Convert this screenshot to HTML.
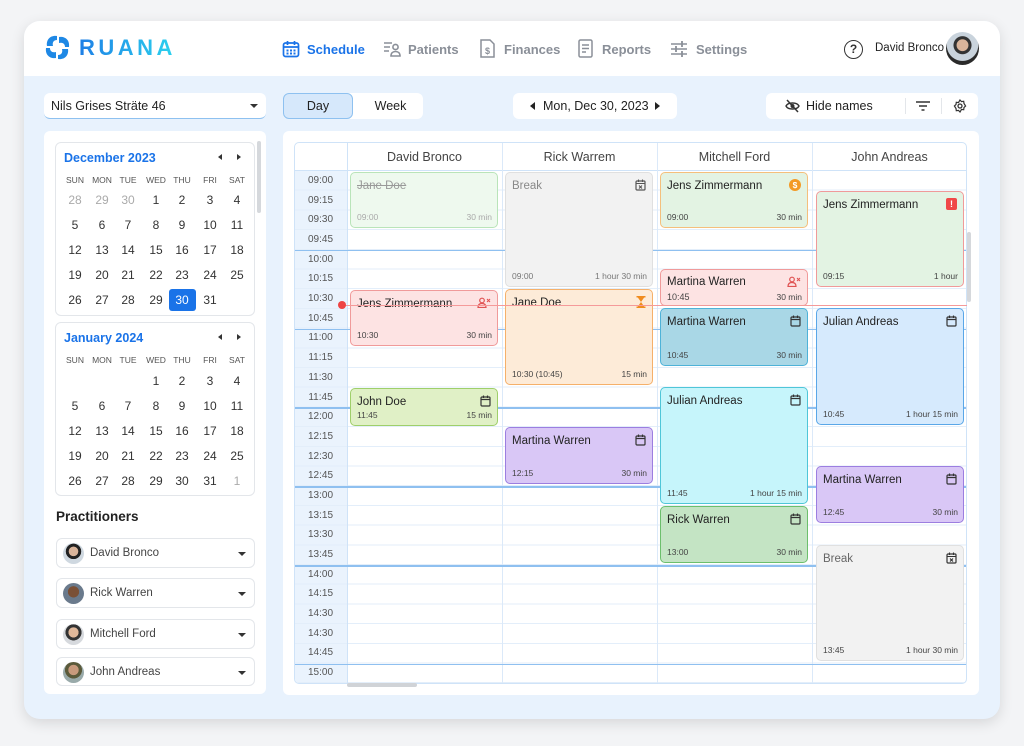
<!DOCTYPE html>
<html><head><meta charset="utf-8">
<style>
*{box-sizing:border-box;margin:0;padding:0}
body{width:1024px;height:746px;background:#f3f4f6;font-family:"Liberation Sans",sans-serif;color:#333;position:relative;overflow:hidden}
.abs{position:absolute}
.card{position:absolute;left:24px;top:21px;width:976px;height:698px;border-radius:16px;background:#e8f2fd;box-shadow:0 4px 14px rgba(0,0,0,.12);overflow:hidden}
.hdr{position:absolute;left:0;top:0;width:976px;height:55px;background:#fff}
.nav{position:absolute;top:21px;font-size:13px;color:#8a8f98;font-weight:bold}
.box{position:absolute;background:#fff;border-radius:6px}
.cal{position:absolute;border:1px solid #e3e6ea;border-radius:6px;background:#fff}
.d{position:absolute;width:26px;text-align:center;font-size:12px;color:#333}
.dw{position:absolute;width:26px;text-align:center;font-size:8.5px;color:#555}
.g{color:#aaa}
.pr{position:absolute;left:56px;width:199px;height:30px;border:1px solid #e3e6ea;border-radius:6px;background:#fff;font-size:11.5px;color:#444}
.pr .av{position:absolute;left:6px;top:4px;width:21px;height:21px;border-radius:50%}
.pr span{position:absolute;left:33px;top:8px}
.caret{position:absolute;width:0;height:0;border-left:4px solid transparent;border-right:4px solid transparent;border-top:4px solid #333}
.tl{position:absolute;left:294px;width:53px;text-align:center;font-size:10px;color:#555}
.ev{position:absolute;border-radius:5px;border:1.3px solid;font-size:11.5px;color:#222}
.ev .n{position:absolute;left:6px;top:7px}
.ev .a{position:absolute;left:6px;bottom:5px;font-size:8.5px;color:#444}
.ev .b{position:absolute;right:5px;bottom:5px;font-size:8.5px;color:#444}
.ic{position:absolute;right:6px;top:6px}
.colh{position:absolute;top:150px;width:155px;text-align:center;font-size:12.5px;color:#444}
</style></head><body>
<div class="card">
 <div class="hdr">
  <svg class="abs" style="left:20px;top:13px" width="27" height="27" viewBox="0 0 27 27">
   <path d="M13 2 C6 1 2 6 3 12 L9 12 C8 8 10 6 13 6 Z" fill="#1e88e5"/>
   <path d="M25 13 C26 6 21 2 15 3 L15 9 C19 8 21 10 21 13 Z" fill="#1e88e5"/>
   <path d="M14 25 C21 26 25 21 24 15 L18 15 C19 19 17 21 14 21 Z" fill="#1e88e5"/>
   <path d="M2 14 C1 21 6 25 12 24 L12 18 C8 19 6 17 6 14 Z" fill="#1e88e5"/>
  </svg>
  <div class="abs" style="left:55px;top:14px;font-size:22px;font-weight:bold;letter-spacing:3.5px;background:linear-gradient(90deg,#1e7fe6,#2cd3ee);-webkit-background-clip:text;color:transparent">RUANA</div>
  <svg class="abs" style="left:258px;top:19px" width="18" height="18" viewBox="0 0 18 18"><rect x="1.5" y="3" width="15" height="13.5" rx="2" fill="none" stroke="#1a73e8" stroke-width="1.7"/><path d="M1.5 7h15M5.5 1v4M12.5 1v4" stroke="#1a73e8" stroke-width="1.7"/><g fill="#1a73e8"><rect x="4.5" y="9.5" width="2" height="2"/><rect x="8" y="9.5" width="2" height="2"/><rect x="11.5" y="9.5" width="2" height="2"/><rect x="4.5" y="12.5" width="2" height="2"/><rect x="8" y="12.5" width="2" height="2"/><rect x="11.5" y="12.5" width="2" height="2"/></g></svg>
  <div class="nav" style="left:283px;color:#1a73e8">Schedule</div>
  <svg class="abs" style="left:359px;top:20px" width="18" height="16" viewBox="0 0 18 16"><path d="M1 2h8M1 6h6M1 10h5" stroke="#8a8f98" stroke-width="1.6"/><circle cx="12.5" cy="6" r="2.6" fill="none" stroke="#8a8f98" stroke-width="1.6"/><path d="M8 15c0-3 2-4.5 4.5-4.5S17 12 17 15z" fill="none" stroke="#8a8f98" stroke-width="1.6"/></svg>
  <div class="nav" style="left:384px">Patients</div>
  <svg class="abs" style="left:456px;top:18px" width="15" height="19" viewBox="0 0 15 19"><path d="M1 1h9l4 4v13H1z" fill="none" stroke="#8a8f98" stroke-width="1.5"/><text x="7.5" y="15" font-size="9" text-anchor="middle" fill="#8a8f98" font-family="Liberation Sans" font-weight="bold">$</text></svg>
  <div class="nav" style="left:480px">Finances</div>
  <svg class="abs" style="left:554px;top:18px" width="15" height="19" viewBox="0 0 15 19"><rect x="1" y="1" width="13" height="17" rx="1.5" fill="none" stroke="#8a8f98" stroke-width="1.5"/><path d="M4 6h7M4 9.5h7M4 13h4" stroke="#8a8f98" stroke-width="1.5"/></svg>
  <div class="nav" style="left:578px">Reports</div>
  <svg class="abs" style="left:646px;top:20px" width="18" height="16" viewBox="0 0 18 16"><path d="M1 3h16M1 8h16M1 13h16" stroke="#8a8f98" stroke-width="1.5"/><path d="M12 0v6M6 5v6M12 10v6" stroke="#8a8f98" stroke-width="1.8"/></svg>
  <div class="nav" style="left:672px">Settings</div>
  <div class="abs" style="left:820px;top:19px;width:19px;height:19px;border:1.7px solid #333;border-radius:50%;text-align:center;font-size:12px;line-height:16px;font-weight:bold;color:#333">?</div>
  <div class="abs" style="left:851px;top:21px;font-size:11.5px;color:#222">David Bronco</div>
  <div class="abs" style="left:922px;top:11px;width:33px;height:33px;border-radius:50%;background:radial-gradient(circle at 50% 40%,#d9b49a 0 22%,#333 24% 34%,#c9d3dc 36% 60%,#2a2a2a 62%)"></div>
 </div>

 <div class="box" style="left:20px;top:72px;width:222px;height:26px;border-bottom:1.5px solid #8ec1f0"><span class="abs" style="left:7px;top:6px;font-size:12.5px;color:#222">Nils Grises Sträte 46</span><span class="caret" style="left:206px;top:11px"></span></div>
 <div class="box" style="left:259px;top:72px;width:140px;height:26px"></div>
 <div class="abs" style="left:259px;top:72px;width:70px;height:26px;background:#d6e8fb;border:1px solid #8ec1f0;border-radius:6px;text-align:center;font-size:12.5px;line-height:24px;color:#222">Day</div>
 <div class="abs" style="left:334px;top:78px;width:65px;text-align:center;font-size:12.5px;color:#222">Week</div>
 <div class="box" style="left:489px;top:72px;width:164px;height:26px;font-size:12.5px;color:#222"><span class="abs" style="left:30px;top:6px">Mon, Dec 30, 2023</span><span class="abs" style="left:17px;top:9px;border-top:4px solid transparent;border-bottom:4px solid transparent;border-right:5px solid #222"></span><span class="abs" style="left:142px;top:9px;border-top:4px solid transparent;border-bottom:4px solid transparent;border-left:5px solid #222"></span></div>
 <div class="box" style="left:742px;top:72px;width:212px;height:26px">
  <svg class="abs" style="left:19px;top:6px" width="15" height="14" viewBox="0 0 15 14"><path d="M1 7c2-4 11-4 13 0c-2 4-11 4-13 0z" fill="none" stroke="#333" stroke-width="1.4"/><circle cx="7.5" cy="7" r="2" fill="#333"/><path d="M2 1l11 12" stroke="#333" stroke-width="1.5"/></svg>
  <span class="abs" style="left:40px;top:6px;font-size:12.5px;color:#222">Hide names</span>
  <div class="abs" style="left:139px;top:5px;width:1px;height:16px;background:#e3e6ea"></div>
  <svg class="abs" style="left:150px;top:8px" width="14" height="10" viewBox="0 0 14 10"><path d="M0 1h14M3 5h8M5.5 9h3" stroke="#333" stroke-width="1.4"/></svg>
  <div class="abs" style="left:175px;top:5px;width:1px;height:16px;background:#e3e6ea"></div>
  <svg class="abs" style="left:187px;top:6px" width="14" height="14" viewBox="0 0 14 14"><circle cx="7" cy="7" r="2" fill="none" stroke="#333" stroke-width="1.3"/><path d="M7 1l1.5 1.6 2.2-.3.3 2.2L12.6 7 11 8.5l-.3 2.2-2.2-.3L7 13l-1.5-1.6-2.2.3-.3-2.2L1.4 7 3 5.5l.3-2.2 2.2.3z" fill="none" stroke="#333" stroke-width="1.2"/></svg>
 </div>

 <div class="box" style="left:20px;top:110px;width:222px;height:563px"></div>
 <div class="abs" style="left:233px;top:120px;width:4px;height:72px;background:#d5d8dc;border-radius:2px"></div>
</div>

<div class="cal" style="left:55px;top:142px;width:200px;height:174px"></div>
<div class="abs" style="left:64px;top:151px;font-size:12.5px;font-weight:bold;color:#1a73e8">December 2023</div>
<span class="abs" style="left:218px;top:154px;border-top:3.5px solid transparent;border-bottom:3.5px solid transparent;border-right:4px solid #333"></span>
<span class="abs" style="left:237px;top:154px;border-top:3.5px solid transparent;border-bottom:3.5px solid transparent;border-left:4px solid #333"></span>
<div class="dw" style="left:62px;top:175px">SUN</div><div class="dw" style="left:89px;top:175px">MON</div><div class="dw" style="left:115px;top:175px">TUE</div><div class="dw" style="left:143px;top:175px">WED</div><div class="dw" style="left:169px;top:175px">THU</div><div class="dw" style="left:197px;top:175px">FRI</div><div class="dw" style="left:224px;top:175px">SAT</div>
<div class="d g" style="left:62px;top:193px">28</div><div class="d g" style="left:89px;top:193px">29</div><div class="d g" style="left:115px;top:193px">30</div><div class="d" style="left:143px;top:193px">1</div><div class="d" style="left:169px;top:193px">2</div><div class="d" style="left:197px;top:193px">3</div><div class="d" style="left:224px;top:193px">4</div>
<div class="d" style="left:62px;top:218px">5</div><div class="d" style="left:89px;top:218px">6</div><div class="d" style="left:115px;top:218px">7</div><div class="d" style="left:143px;top:218px">8</div><div class="d" style="left:169px;top:218px">9</div><div class="d" style="left:197px;top:218px">10</div><div class="d" style="left:224px;top:218px">11</div>
<div class="d" style="left:62px;top:243px">12</div><div class="d" style="left:89px;top:243px">13</div><div class="d" style="left:115px;top:243px">14</div><div class="d" style="left:143px;top:243px">15</div><div class="d" style="left:169px;top:243px">16</div><div class="d" style="left:197px;top:243px">17</div><div class="d" style="left:224px;top:243px">18</div>
<div class="d" style="left:62px;top:268px">19</div><div class="d" style="left:89px;top:268px">20</div><div class="d" style="left:115px;top:268px">21</div><div class="d" style="left:143px;top:268px">22</div><div class="d" style="left:169px;top:268px">23</div><div class="d" style="left:197px;top:268px">24</div><div class="d" style="left:224px;top:268px">25</div>
<div class="abs" style="left:169px;top:289px;width:27px;height:22px;background:#1a73e8;border-radius:3px"></div>
<div class="d" style="left:62px;top:293px">26</div><div class="d" style="left:89px;top:293px">27</div><div class="d" style="left:115px;top:293px">28</div><div class="d" style="left:143px;top:293px">29</div><div class="d" style="left:169px;top:293px;color:#fff">30</div><div class="d" style="left:197px;top:293px">31</div>

<div class="cal" style="left:55px;top:322px;width:200px;height:174px"></div>
<div class="abs" style="left:64px;top:331px;font-size:12.5px;font-weight:bold;color:#1a73e8">January 2024</div>
<span class="abs" style="left:218px;top:334px;border-top:3.5px solid transparent;border-bottom:3.5px solid transparent;border-right:4px solid #333"></span>
<span class="abs" style="left:237px;top:334px;border-top:3.5px solid transparent;border-bottom:3.5px solid transparent;border-left:4px solid #333"></span>
<div class="dw" style="left:62px;top:355px">SUN</div><div class="dw" style="left:89px;top:355px">MON</div><div class="dw" style="left:115px;top:355px">TUE</div><div class="dw" style="left:143px;top:355px">WED</div><div class="dw" style="left:169px;top:355px">THU</div><div class="dw" style="left:197px;top:355px">FRI</div><div class="dw" style="left:224px;top:355px">SAT</div>
<div class="d" style="left:143px;top:374px">1</div><div class="d" style="left:169px;top:374px">2</div><div class="d" style="left:197px;top:374px">3</div><div class="d" style="left:224px;top:374px">4</div>
<div class="d" style="left:62px;top:399px">5</div><div class="d" style="left:89px;top:399px">6</div><div class="d" style="left:115px;top:399px">7</div><div class="d" style="left:143px;top:399px">8</div><div class="d" style="left:169px;top:399px">9</div><div class="d" style="left:197px;top:399px">10</div><div class="d" style="left:224px;top:399px">11</div>
<div class="d" style="left:62px;top:424px">12</div><div class="d" style="left:89px;top:424px">13</div><div class="d" style="left:115px;top:424px">14</div><div class="d" style="left:143px;top:424px">15</div><div class="d" style="left:169px;top:424px">16</div><div class="d" style="left:197px;top:424px">17</div><div class="d" style="left:224px;top:424px">18</div>
<div class="d" style="left:62px;top:449px">19</div><div class="d" style="left:89px;top:449px">20</div><div class="d" style="left:115px;top:449px">21</div><div class="d" style="left:143px;top:449px">22</div><div class="d" style="left:169px;top:449px">23</div><div class="d" style="left:197px;top:449px">24</div><div class="d" style="left:224px;top:449px">25</div>
<div class="d" style="left:62px;top:474px">26</div><div class="d" style="left:89px;top:474px">27</div><div class="d" style="left:115px;top:474px">28</div><div class="d" style="left:143px;top:474px">29</div><div class="d" style="left:169px;top:474px">30</div><div class="d" style="left:197px;top:474px">31</div><div class="d g" style="left:224px;top:474px">1</div>

<div class="abs" style="left:56px;top:509px;font-size:13.5px;font-weight:bold;color:#222">Practitioners</div>
<div class="pr" style="top:538px"><div class="av" style="background:radial-gradient(circle at 50% 40%,#d9b49a 0 28%,#222 30% 46%,#cfd8e0 48%)"></div><span>David Bronco</span><i class="caret" style="left:181px;top:13px"></i></div>
<div class="pr" style="top:578px"><div class="av" style="background:radial-gradient(circle at 50% 42%,#7a5036 0 34%,#6a7a8c 36%)"></div><span>Rick Warren</span><i class="caret" style="left:181px;top:13px"></i></div>
<div class="pr" style="top:619px"><div class="av" style="background:radial-gradient(circle at 50% 40%,#e0b89a 0 30%,#333 32% 48%,#d6d9dd 50%)"></div><span>Mitchell Ford</span><i class="caret" style="left:181px;top:13px"></i></div>
<div class="pr" style="top:657px;height:29px"><div class="av" style="background:radial-gradient(circle at 50% 38%,#c89a7c 0 30%,#5b5a3a 32% 50%,#9aa 52%)"></div><span>John Andreas</span><i class="caret" style="left:181px;top:13px"></i></div>

<div class="abs" style="left:283px;top:131px;width:696px;height:564px;background:#fff;border-radius:6px"></div>
<div class="abs" style="left:294px;top:142px;width:673px;height:542px;border:1px solid #cfe3f8;border-radius:5px;overflow:hidden">
 <div class="abs" style="left:0;top:28px;width:53px;height:514px;background:#eaf3fd"></div>
 <div class="abs" style="left:0;top:28px;width:673px;height:514px;background:repeating-linear-gradient(180deg,transparent 0,transparent 18.7px,#e3eefa 18.7px,#e3eefa 19.7px)"></div>
 <div class="abs" style="left:0;top:27px;width:673px;height:1px;background:#cfe3f8"></div>
 <div class="abs" style="left:52px;top:0;width:1px;height:542px;background:#cfe3f8"></div>
 <div class="abs" style="left:207px;top:0;width:1px;height:542px;background:#dbe9f9"></div>
 <div class="abs" style="left:362px;top:0;width:1px;height:542px;background:#dbe9f9"></div>
 <div class="abs" style="left:517px;top:0;width:1px;height:542px;background:#dbe9f9"></div>
 <div class="abs" style="left:0;top:106.8px;width:673px;height:1.5px;background:#8fc0f0"></div>
 <div class="abs" style="left:0;top:185.6px;width:673px;height:1.5px;background:#8fc0f0"></div>
 <div class="abs" style="left:0;top:264.4px;width:673px;height:1.5px;background:#8fc0f0"></div>
 <div class="abs" style="left:0;top:343.2px;width:673px;height:1.5px;background:#8fc0f0"></div>
 <div class="abs" style="left:0;top:422px;width:673px;height:1.5px;background:#8fc0f0"></div>
 <div class="abs" style="left:0;top:520.5px;width:673px;height:1.5px;background:#8fc0f0"></div>
</div>
<div class="colh" style="left:347px">David Bronco</div>
<div class="colh" style="left:502px">Rick Warrem</div>
<div class="colh" style="left:657px">Mitchell Ford</div>
<div class="colh" style="left:812px">John Andreas</div>

<div class="tl" style="top:175px">09:00</div><div class="tl" style="top:195px">09:15</div><div class="tl" style="top:214px">09:30</div><div class="tl" style="top:234px">09:45</div>
<div class="tl" style="top:254px">10:00</div><div class="tl" style="top:273px">10:15</div><div class="tl" style="top:293px">10:30</div><div class="tl" style="top:313px">10:45</div>
<div class="tl" style="top:332px">11:00</div><div class="tl" style="top:352px">11:15</div><div class="tl" style="top:372px">11:30</div><div class="tl" style="top:392px">11:45</div>
<div class="tl" style="top:411px">12:00</div><div class="tl" style="top:431px">12:15</div><div class="tl" style="top:451px">12:30</div><div class="tl" style="top:470px">12:45</div>
<div class="tl" style="top:490px">13:00</div><div class="tl" style="top:510px">13:15</div><div class="tl" style="top:529px">13:30</div><div class="tl" style="top:549px">13:45</div>
<div class="tl" style="top:569px">14:00</div><div class="tl" style="top:588px">14:15</div><div class="tl" style="top:608px">14:30</div><div class="tl" style="top:628px">14:30</div>
<div class="tl" style="top:647px">14:45</div><div class="tl" style="top:667px">15:00</div>

<div class="ev" style="left:350px;top:172px;width:148px;height:56px;background:#eef9ee;border-color:#b9e4b9"><span class="n" style="color:#999;text-decoration:line-through">Jane Doe</span><span class="a" style="color:#aaa">09:00</span><span class="b" style="color:#aaa">30 min</span></div>
<div class="ev" style="left:350px;top:290px;width:148px;height:56px;background:#fde3e3;border-color:#f09a9a"><span class="n">Jens Zimmermann</span><svg class="ic" width="14" height="11" viewBox="0 0 14 11"><circle cx="5" cy="3.5" r="2.3" fill="none" stroke="#e05252" stroke-width="1.2"/><path d="M1 10.5c0-3 2-4 4-4s4 1 4 4z" fill="none" stroke="#e05252" stroke-width="1.2"/><path d="M10 2l3 3M13 2l-3 3" stroke="#e05252" stroke-width="1.1"/></svg><span class="a">10:30</span><span class="b">30 min</span></div>
<div class="ev" style="left:350px;top:388px;width:148px;height:38px;background:#e0f0c6;border-color:#9fcf6a"><span class="n">John Doe</span><svg class="ic" width="11" height="12" viewBox="0 0 11 12"><rect x="1" y="2" width="9" height="9" rx="1" fill="none" stroke="#333" stroke-width="1.2"/><path d="M1 4.5h9M3.5 0.5v2.5M7.5 0.5v2.5" stroke="#333" stroke-width="1.2"/></svg><span class="a" style="bottom:auto;top:21px">11:45</span><span class="b">15 min</span></div>

<div class="ev" style="left:505px;top:172px;width:148px;height:115px;background:#f2f2f2;border-color:#e0e0e0"><span class="n" style="color:#888">Break</span><svg class="ic" width="11" height="12" viewBox="0 0 11 12"><rect x="1" y="2" width="9" height="9" rx="1" fill="none" stroke="#555" stroke-width="1.2"/><path d="M1 4.5h9M3.5 0.5v2.5M7.5 0.5v2.5M4 6.5l3 3M7 6.5l-3 3" stroke="#555" stroke-width="1.1"/></svg><span class="a" style="color:#777">09:00</span><span class="b" style="color:#777">1 hour 30 min</span></div>
<div class="ev" style="left:505px;top:289px;width:148px;height:96px;background:#fdebd8;border-color:#f5b06a"><span class="n">Jane Doe</span><svg class="ic" width="10" height="12" viewBox="0 0 10 12"><path d="M0.5 0.8h9M0.5 11.2h9" stroke="#f08c1e" stroke-width="1.5"/><path d="M1.5 1l7 0L5 6zM5 6l3.5 5h-7z" fill="#f08c1e"/></svg><span class="a">10:30 (10:45)</span><span class="b">15 min</span></div>
<div class="ev" style="left:505px;top:427px;width:148px;height:57px;background:#d9c7f6;border-color:#9c7ee0"><span class="n">Martina Warren</span><svg class="ic" width="11" height="12" viewBox="0 0 11 12"><rect x="1" y="2" width="9" height="9" rx="1" fill="none" stroke="#333" stroke-width="1.2"/><path d="M1 4.5h9M3.5 0.5v2.5M7.5 0.5v2.5" stroke="#333" stroke-width="1.2"/></svg><span class="a">12:15</span><span class="b">30 min</span></div>

<div class="abs" style="left:342px;top:305px;width:625px;height:1.3px;background:#f59a9a"></div>
<div class="abs" style="left:338px;top:301px;width:8px;height:8px;border-radius:50%;background:#ee4444"></div>

<div class="ev" style="left:660px;top:172px;width:148px;height:56px;background:#e3f3e3;border-color:#f4bf7c"><span class="n">Jens Zimmermann</span><div class="ic" style="width:12px;height:12px;border-radius:50%;background:#f39a26;color:#fff;font-size:8.5px;text-align:center;line-height:12px;font-weight:bold">$</div><span class="a">09:00</span><span class="b">30 min</span></div>
<div class="ev" style="left:660px;top:269px;width:148px;height:37px;background:#fde3e3;border-color:#f09a9a"><span class="n" style="top:6px">Martina Warren</span><svg class="ic" width="14" height="11" viewBox="0 0 14 11"><circle cx="5" cy="3.5" r="2.3" fill="none" stroke="#e05252" stroke-width="1.2"/><path d="M1 10.5c0-3 2-4 4-4s4 1 4 4z" fill="none" stroke="#e05252" stroke-width="1.2"/><path d="M10 2l3 3M13 2l-3 3" stroke="#e05252" stroke-width="1.1"/></svg><span class="a" style="font-size:9px;bottom:3px">10:45</span><span class="b" style="bottom:3px">30 min</span></div>
<div class="ev" style="left:660px;top:308px;width:148px;height:58px;background:#a9d7e6;border-color:#4eb2d8"><span class="n">Martina Warren</span><svg class="ic" width="11" height="12" viewBox="0 0 11 12"><rect x="1" y="2" width="9" height="9" rx="1" fill="none" stroke="#333" stroke-width="1.2"/><path d="M1 4.5h9M3.5 0.5v2.5M7.5 0.5v2.5" stroke="#333" stroke-width="1.2"/></svg><span class="a">10:45</span><span class="b">30 min</span></div>
<div class="ev" style="left:660px;top:387px;width:148px;height:117px;background:#c6f5fb;border-color:#4fc6d8"><span class="n">Julian Andreas</span><svg class="ic" width="11" height="12" viewBox="0 0 11 12"><rect x="1" y="2" width="9" height="9" rx="1" fill="none" stroke="#333" stroke-width="1.2"/><path d="M1 4.5h9M3.5 0.5v2.5M7.5 0.5v2.5" stroke="#333" stroke-width="1.2"/></svg><span class="a">11:45</span><span class="b">1 hour 15 min</span></div>
<div class="ev" style="left:660px;top:506px;width:148px;height:57px;background:#c4e4c4;border-color:#6cbf6c"><span class="n">Rick Warren</span><svg class="ic" width="11" height="12" viewBox="0 0 11 12"><rect x="1" y="2" width="9" height="9" rx="1" fill="none" stroke="#333" stroke-width="1.2"/><path d="M1 4.5h9M3.5 0.5v2.5M7.5 0.5v2.5" stroke="#333" stroke-width="1.2"/></svg><span class="a">13:00</span><span class="b">30 min</span></div>

<div class="ev" style="left:816px;top:191px;width:148px;height:96px;background:#e3f3e3;border-color:#f09a9a"><span class="n">Jens Zimmermann</span><div class="ic" style="width:11px;height:12px;border-radius:2px;background:#f04848;color:#fff;font-size:9px;text-align:center;line-height:12px;font-weight:bold">!</div><span class="a">09:15</span><span class="b">1 hour</span></div>
<div class="ev" style="left:816px;top:308px;width:148px;height:117px;background:#d6eafd;border-color:#5aa7e8"><span class="n">Julian Andreas</span><svg class="ic" width="11" height="12" viewBox="0 0 11 12"><rect x="1" y="2" width="9" height="9" rx="1" fill="none" stroke="#333" stroke-width="1.2"/><path d="M1 4.5h9M3.5 0.5v2.5M7.5 0.5v2.5" stroke="#333" stroke-width="1.2"/></svg><span class="a">10:45</span><span class="b">1 hour 15 min</span></div>
<div class="ev" style="left:816px;top:466px;width:148px;height:57px;background:#d9c7f6;border-color:#9c7ee0"><span class="n">Martina Warren</span><svg class="ic" width="11" height="12" viewBox="0 0 11 12"><rect x="1" y="2" width="9" height="9" rx="1" fill="none" stroke="#333" stroke-width="1.2"/><path d="M1 4.5h9M3.5 0.5v2.5M7.5 0.5v2.5" stroke="#333" stroke-width="1.2"/></svg><span class="a">12:45</span><span class="b">30 min</span></div>
<div class="ev" style="left:816px;top:545px;width:148px;height:116px;background:#f2f2f2;border-color:#e0e0e0"><span class="n" style="color:#666">Break</span><svg class="ic" width="11" height="12" viewBox="0 0 11 12"><rect x="1" y="2" width="9" height="9" rx="1" fill="none" stroke="#333" stroke-width="1.2"/><path d="M1 4.5h9M3.5 0.5v2.5M7.5 0.5v2.5M4 6.5l3 3M7 6.5l-3 3" stroke="#333" stroke-width="1.1"/></svg><span class="a">13:45</span><span class="b">1 hour 30 min</span></div>

<div class="abs" style="left:967px;top:232px;width:4px;height:70px;background:#d5d8dc;border-radius:2px"></div>
<div class="abs" style="left:347px;top:683px;width:70px;height:4px;background:#d0d3d7;border-radius:2px"></div>
</body></html>
